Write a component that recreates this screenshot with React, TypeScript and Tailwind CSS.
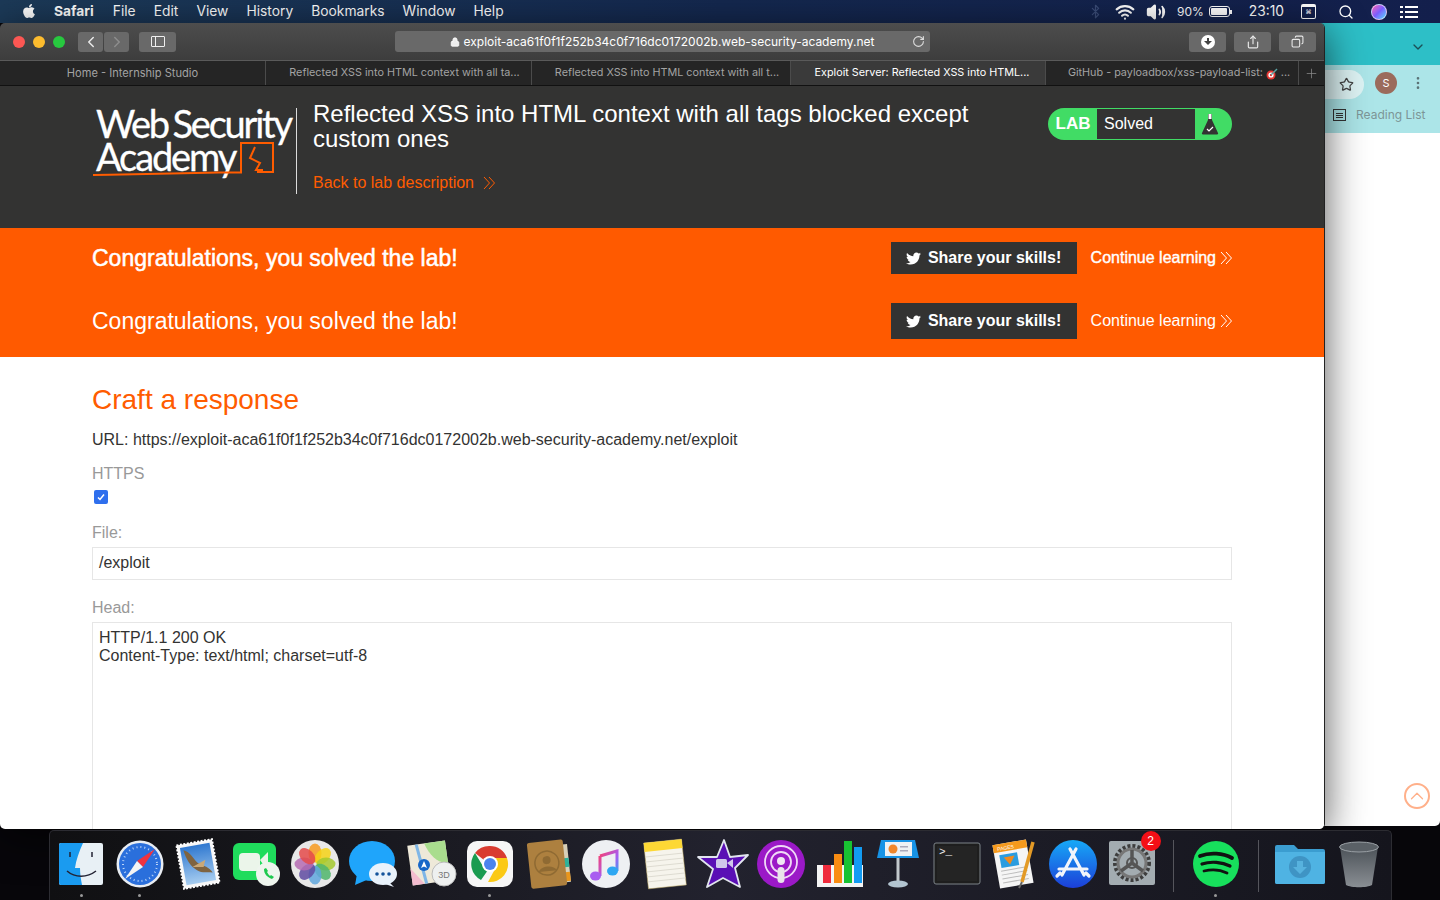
import React from 'react';
import { Bluetooth, ChevronDown, ChevronLeft, ChevronRight, ChevronUp, Copy, EllipsisVertical, Lock, Plus, RotateCw, Search, Share, Star, Volume2, Wifi } from 'lucide-react';
import { FaApple, FaTwitter } from 'react-icons/fa';

const menus = ['File', 'Edit', 'View', 'History', 'Bookmarks', 'Window', 'Help'];

const DoubleChevron = ({ className }: { className: string }) => (
  <svg className={className} width="12" height="14" viewBox="0 0 12 14" fill="none" stroke="currentColor" strokeWidth="1">
    <path d="M1 1 6.500 7 1 13M6 1 11.500 7 6 13" />
  </svg>
);

const MenuBar = () => (
  <div className="h-[23px] flex items-center pl-[21px] text-white text-[13.800px] font-['Inter',sans-serif] bg-gradient-to-r from-[#1c3a58] via-[#14284f] to-[#131f4c]">
    <FaApple size={16} className="mb-[2px]" />
    <span className="ml-[17px] font-bold">Safari</span>
    <div className="flex gap-[18.100px] ml-[19px]">
      {menus.map((m) => <span key={m}>{m}</span>)}
    </div>
    <div className="ml-auto flex items-center pr-[22px]">
      <Bluetooth size={15} className="text-[#3b4d78]" />
      <Wifi size={20} strokeWidth={2.6} className="ml-[12px]" />
      <Volume2 size={20} fill="#fff" className="ml-[11px]" />
      <span className="ml-[11px] text-[12px]">90%</span>
      <div className="ml-[5px] w-[21px] h-[11px] rounded-[3px] border border-white p-[1px]"><div className="h-full w-[16px] bg-white rounded-[1px]" /></div>
      <div className="w-[2px] h-[4px] bg-white" />
      <span className="ml-[17px]">23:10</span>
      <div className="ml-[17px] w-[15px] h-[15px] rounded-[2px] border border-white border-t-[3px] text-[6px] leading-[10px] text-center">⌘</div>
      <Search size={16} className="ml-[22px]" />
      <div className="ml-[17px] w-[16px] h-[16px] rounded-full bg-gradient-to-br from-[#ff4fb0] via-[#7a5cff] to-[#3bd6ff] border border-white/60" />
      <div className="ml-[13px] w-[18px] flex flex-col gap-[3px]">
        {[0, 1, 2].map((i) => (
          <div key={i} className="flex gap-[2px]"><div className="w-[3px] h-[2px] bg-white" /><div className="flex-1 h-[2px] bg-white" /></div>
        ))}
      </div>
    </div>
  </div>
);

const ToolButton = ({ className, children }: { className: string; children: React.ReactNode }) => (
  <div className={`h-[20px] bg-[#696969] rounded-[3px] flex items-center justify-center text-[#e8e8e8] ${className}`}>{children}</div>
);

const Toolbar = () => (
  <div className="h-[38px] flex items-center bg-gradient-to-b from-[#4d4d4d] to-[#3d3d3d] border-b border-[#5a5a5a]">
    <div className="flex gap-[8px] ml-[13px]">
      <div className="w-[12px] h-[12px] rounded-full bg-[#fc5753]" />
      <div className="w-[12px] h-[12px] rounded-full bg-[#fdbc2e]" />
      <div className="w-[12px] h-[12px] rounded-full bg-[#27c83f]" />
    </div>
    <div className="flex gap-[1px] ml-[13px]">
      <ToolButton className="w-[25px]"><ChevronLeft size={18} /></ToolButton>
      <ToolButton className="w-[25px]"><ChevronRight size={18} className="text-[#8d8d8d]" /></ToolButton>
    </div>
    <ToolButton className="w-[37px] ml-[10px]">
      <div className="w-[14px] h-[11px] border border-[#eee] rounded-[1px] flex"><div className="w-[4px] border-r border-[#eee]" /></div>
    </ToolButton>
    <div className="ml-[219px] w-[535px] h-[21px] bg-[#696969] rounded-[3px] flex items-center text-white text-[12px] font-['Inter',sans-serif] pr-[5px]">
      <div className="flex-1 flex items-center justify-center pl-[17px] pt-[1px]">
        <Lock size={10} fill="#eee" className="mr-[4px]" />
        <span>exploit-aca61f0f1f252b34c0f716dc0172002b.web-security-academy.net</span>
      </div>
      <RotateCw size={13} className="text-[#ddd]" />
    </div>
    <ToolButton className="w-[37px] ml-[259px]">
      <div className="w-[14px] h-[14px] rounded-full bg-white flex flex-col items-center justify-center">
        <div className="w-[2px] h-[3px] bg-[#444]" />
        <div className="w-0 h-0 border-x-[4px] border-x-transparent border-t-[4px] border-t-[#444]" />
      </div>
    </ToolButton>
    <ToolButton className="w-[37px] ml-[8px]"><Share size={14} /></ToolButton>
    <ToolButton className="w-[37px] ml-[8px]"><Copy size={13} className="-scale-x-100" /></ToolButton>
  </div>
);

const tabs = [
  { w: 'w-[266px]', label: 'Home - Internship Studio', pad: 'text-[11.100px]' },
  { w: 'w-[266px]', label: 'Reflected XSS into HTML context with all ta...', pad: 'pl-[12px] text-[10.800px]' },
  { w: 'w-[259px]', label: 'Reflected XSS into HTML context with all t...', pad: 'pl-[12px] text-[10.800px]' },
  { w: 'w-[255px]', label: 'Exploit Server: Reflected XSS into HTML...', pad: 'pl-[8px] text-[10.800px]', active: true },
];

const TabBar = () => (
  <div className="h-[25px] flex bg-[#252525] border-b border-[#111] text-[11px] font-['Inter',sans-serif] text-[#a3a3a3]">
    {tabs.map((t) => (
      <div key={t.label} className={`${t.w} ${t.pad} pt-[1px] border-r border-[#4b4b4b] flex items-center justify-center ${t.active ? 'bg-[#3a3a3a] text-white' : ''}`}>{t.label}</div>
    ))}
    <div className="w-[253px] pl-[14px] pt-[1px] text-[10.800px] border-r border-[#4b4b4b] flex items-center justify-center gap-[3px]">
      <span>GitHub - payloadbox/xss-payload-list:</span>
      <svg width="12" height="12" viewBox="0 0 12 12"><circle cx="5" cy="7" r="4.500" fill="#e53935" /><circle cx="5" cy="7" r="2.600" fill="#fff" /><circle cx="5" cy="7" r="1.200" fill="#e53935" /><path d="M5 7 11 1" stroke="#5ba4a4" strokeWidth="1.500" /></svg>
      <span>...</span>
    </div>
    <div className="flex-1 flex items-center justify-center"><Plus size={15} strokeWidth={1.2} className="text-[#8a8a8a]" /></div>
  </div>
);

const LabHeader = () => (
  <div className="h-[142px] bg-[#333332] flex pl-[92px] pr-[92px] pt-[14px] font-['Liberation_Sans',sans-serif] text-white">
    <div className="relative w-[205px] h-[86px] mt-[8px] border-r border-[#dcdcdc] shrink-0">
      <div className="pl-[4px] -mt-[1px] text-[38px] leading-[33px] font-['Lato',sans-serif] whitespace-nowrap [-webkit-text-stroke:0.3px_white]">
        <div className="tracking-[-2.200px] [word-spacing:-3px]">Web Security</div>
        <div className="tracking-[-2.100px]">Academy</div>
      </div>
      <svg className="absolute left-0 top-[30px]" width="190" height="42" viewBox="0 0 190 42" fill="none" stroke="#ff5c00" strokeWidth="2">
        <path d="M1 37C45 36.500 90 35.500 128 34.500H149V5H181V34H165" />
        <path d="M163 9 158 20 168 25 164 32H171" />
      </svg>
    </div>
    <div className="ml-[16px] mt-[1px] w-[680px]">
      <div className="text-[24px] leading-[25px] whitespace-nowrap">Reflected XSS into HTML context with all tags blocked except<br />custom ones</div>
      <div className="mt-[20px] flex items-center text-[16px] text-[#ff5c00]">
        <span>Back to lab description</span>
        <DoubleChevron className="ml-[9px]" />
      </div>
    </div>
    <div className="ml-auto mt-[8px] w-[184px] h-[32px] rounded-full bg-[#41dc65] flex items-center overflow-hidden">
      <span className="w-[49px] text-center text-[17px] font-bold pl-[1px]">LAB</span>
      <div className="w-[98px] h-[30px] bg-[#333332] flex items-center pl-[7px] text-[16px]">Solved</div>
      <svg className="ml-[6px]" width="18" height="22" viewBox="0 0 18 22">
        <path d="M7 1h4v6l6 13a1 1 0 0 1-1 1.500H2a1 1 0 0 1-1-1.500L7 7z" fill="#333332" />
        <rect x="7.500" y="1" width="3" height="5" fill="#fff" />
        <path d="M6 16l2 2 4-4" stroke="#fff" strokeWidth="1.200" fill="none" />
      </svg>
    </div>
  </div>
);

const Congrats = ({ bold, rowClass, btnClass }: { bold?: boolean; rowClass: string; btnClass: string }) => (
  <div className={`flex items-center px-[92px] text-white font-['Liberation_Sans',sans-serif] ${rowClass}`}>
    <span className={`text-[23px] ${bold ? '[-webkit-text-stroke:0.5px_white]' : ''}`}>Congratulations, you solved the lab!</span>
    <div className={`ml-auto w-[186px] bg-[#333332] flex items-center justify-center gap-[7px] text-[16px] font-bold ${btnClass}`}>
      <FaTwitter size={15} className="mt-[1px]" />
      <span>Share your skills!</span>
    </div>
    <span className={`ml-[14px] text-[16px] ${bold ? '[-webkit-text-stroke:0.4px_white]' : ''}`}>Continue learning</span>
    <DoubleChevron className="ml-[4px]" />
  </div>
);

const Form = () => (
  <div className="flex-1 bg-white px-[92px] font-['Liberation_Sans',sans-serif] text-[16px] text-[#333332] overflow-hidden">
    <h2 className="mt-[26px] text-[28px] leading-[34px] text-[#ff5c00]">Craft a response</h2>
    <p className="mt-[13px] leading-[20px]">URL: https://exploit-aca61f0f1f252b34c0f716dc0172002b.web-security-academy.net/exploit</p>
    <div className="mt-[14px] leading-[20px] text-[#999]">HTTPS</div>
    <div className="mt-[6px] ml-[2px] w-[14px] h-[14px] rounded-[2px] bg-[#2f6fed] flex items-center justify-center">
      <svg width="10" height="10" viewBox="0 0 10 10" fill="none" stroke="#fff" strokeWidth="1.500"><path d="M2 5.500 4 7.500 8 2.500" /></svg>
    </div>
    <div className="mt-[19px] leading-[20px] text-[#999]">File:</div>
    <div className="mt-[4px] h-[33px] border border-[#e6e6e6] flex items-center px-[6px] pb-[2px]">/exploit</div>
    <div className="mt-[18px] leading-[20px] text-[#999]">Head:</div>
    <div className="mt-[4px] h-[300px] border border-[#e6e6e6] px-[6px] pt-[6px] leading-[18px]">
      HTTP/1.1 200 OK<br />Content-Type: text/html; charset=utf-8
    </div>
  </div>
);

const SafariWindow = () => (
  <div className="absolute left-0 top-[23px] w-[1325px] h-[806px] rounded-[5px] overflow-hidden flex flex-col border-r border-[#222] shadow-[0_8px_40px_rgba(0,0,0,0.65)]">
    <Toolbar />
    <TabBar />
    <LabHeader />
    <div className="bg-[#ff5a00]">
      <Congrats bold rowClass="h-[62px] pb-[2px]" btnClass="h-[32px]" />
      <Congrats rowClass="h-[67px] pb-[5px]" btnClass="h-[36px]" />
    </div>
    <Form />
  </div>
);

const ChromeWindow = () => (
  <div className="absolute left-[1300px] top-[23px] w-[140px] h-[803px] bg-white rounded-b-[5px] flex flex-col font-['Inter',sans-serif]">
    <div className="h-[42px] bg-[#2dbfc7] flex items-center justify-end pr-[14px] pt-[6px]">
      <ChevronDown size={16} className="text-[#1c4e55]" />
    </div>
    <div className="h-[68px] bg-[#ace5e8]">
      <div className="h-[36px] flex items-center">
        <div className="w-[64px] h-[29px] mt-[2px] bg-[#ddf3f4] rounded-r-full flex items-center justify-end pr-[10px]">
          <Star size={15} className="text-[#444]" />
        </div>
        <div className="ml-[11px] w-[22px] h-[22px] rounded-full bg-[#9b6b5c] text-white text-[11px] flex items-center justify-center">S</div>
        <EllipsisVertical size={16} className="ml-[13px] text-[#5a7376]" />
      </div>
      <div className="flex items-center pl-[33px] mt-[5px] text-[12px] text-[#7d9597]">
        <div className="w-[13px] h-[12px] border border-[#333] flex flex-col justify-center gap-[1px] pl-[2px]">
          <div className="h-[1px] w-[7px] bg-[#333]" /><div className="h-[1px] w-[7px] bg-[#333]" /><div className="h-[1px] w-[7px] bg-[#333]" />
        </div>
        <span className="ml-[10px]">Reading List</span>
      </div>
    </div>
    <div className="relative flex-1">
      <div className="absolute left-[104px] top-[650px] w-[26px] h-[26px] rounded-full border-2 border-[#ffb08a] flex items-center justify-center">
        <ChevronUp size={22} strokeWidth={1.4} className="text-[#ffb08a]" />
      </div>
    </div>
  </div>
);

/* dock icons, all on a 52x52 canvas */
const Finder = () => (
  <svg width="52" height="52" viewBox="0 0 52 52">
    <rect x="4" y="5" width="44" height="42" rx="2" fill="#e8f0f5" />
    <path d="M6 5H28C24 14 21 22 20 30H25C25 36 26 42 27 47H6a2 2 0 0 1-2-2V7a2 2 0 0 1 2-2z" fill="#1a9bf0" />
    <path d="M15 14v5M37 14v5" stroke="#223" strokeWidth="1.500" />
    <path d="M12 33C20 40 32 40 41 33" stroke="#223" strokeWidth="1.500" fill="none" />
  </svg>
);

const SafariIcon = () => (
  <svg width="52" height="52" viewBox="0 0 52 52">
    <circle cx="26" cy="26" r="23.500" fill="#e9edf2" />
    <circle cx="26" cy="26" r="21" fill="#2a6fdc" />
    <circle cx="26" cy="26" r="17" fill="none" stroke="#bcd5f7" strokeWidth="2" strokeDasharray="1 3" />
    <path d="M41 11 23 23 29 29z" fill="#ef3340" />
    <path d="M11 41 23 23 29 29z" fill="#f4f4f4" />
  </svg>
);

const Mail = () => (
  <svg width="52" height="52" viewBox="0 0 52 52">
    <defs><linearGradient id="sky" x1="0" y1="0" x2="0" y2="1"><stop offset="0" stopColor="#2f78d0" /><stop offset="1" stopColor="#a7cdf0" /></linearGradient></defs>
    <g transform="rotate(-10 26 26)">
      <rect x="8" y="4" width="36" height="44" fill="#f7f7f7" stroke="#fff" strokeWidth="2" strokeDasharray="2 1.500" />
      <rect x="11" y="7" width="30" height="38" fill="url(#sky)" />
      <path d="M14 10C20 12 22 20 26 25 31 29 37 31 39 37 33 35 28 36 24 32 18 27 15 19 14 10z" fill="#7f6440" />
      <path d="M20 28 34 23 31 30z" fill="#c9a877" />
    </g>
  </svg>
);

const FaceTime = () => (
  <svg width="52" height="52" viewBox="0 0 52 52">
    <rect x="3" y="5" width="43" height="37" rx="6" fill="#1fdc5c" />
    <rect x="9" y="15" width="21" height="18" rx="4" fill="#ebf5ea" />
    <path d="M30 22 38 14V33z" fill="#ebf5ea" />
    <circle cx="38" cy="36" r="12" fill="#eef5ee" />
    <path d="M34 31c0 5 3 8 8 10l2-2-3-2-1 1c-1-1-2-2-3-4l1-1-2-3z" fill="#1fc94f" />
  </svg>
);

const petals = ['#f79a1e', '#f6d216', '#a5c92e', '#4fb56b', '#60a7de', '#5f4ba1', '#b56bb3', '#e44a4a'];
const Photos = () => (
  <svg width="52" height="52" viewBox="0 0 52 52">
    <circle cx="26" cy="26" r="24" fill="#e8e8e8" />
    {petals.map((c, i) => (
      <ellipse key={c} cx="26" cy="15" rx="6.500" ry="9.500" fill={c} fillOpacity="0.85" transform={`rotate(${i * 45} 26 26)`} />
    ))}
  </svg>
);

const Messages = () => (
  <svg width="52" height="52" viewBox="0 0 52 52">
    <ellipse cx="25" cy="23" rx="23" ry="20" fill="#1fa5fb" />
    <path d="M10 36 8 47 22 41z" fill="#1fa5fb" />
    <ellipse cx="36" cy="36" rx="14" ry="11" fill="#e9f2fb" />
    <path d="M42 44 47 49 38 46z" fill="#e9f2fb" />
    <circle cx="30" cy="36" r="1.800" fill="#14539b" /><circle cx="36" cy="36" r="1.800" fill="#14539b" /><circle cx="42" cy="36" r="1.800" fill="#14539b" />
  </svg>
);

const Maps = () => (
  <svg width="52" height="52" viewBox="0 0 52 52">
    <g transform="rotate(-8 24 26)">
      <rect x="5" y="5" width="38" height="40" fill="#eee9d9" />
      <path d="M22 5H43V27C33 27 26 18 22 5z" fill="#a9dd8e" />
      <path d="M5 28 17 45H5z" fill="#f3bccf" />
      <path d="M14 5 19 45" stroke="#7fb6e6" strokeWidth="3" />
    </g>
    <circle cx="19" cy="27" r="6" fill="#1767c8" />
    <path d="M19 23 22 30 19 28.500 16 30z" fill="#fff" />
    <circle cx="39" cy="36" r="12" fill="#eef0f0" stroke="#bbb" />
    <text x="39" y="39.500" textAnchor="middle" fontSize="9" fill="#777" fontFamily="Liberation Sans">3D</text>
  </svg>
);

const ChromeIcon = () => (
  <svg width="52" height="52" viewBox="0 0 52 52">
    <rect x="3" y="3" width="46" height="46" rx="10" fill="#f6f6f6" />
    <path d="M26 8A18 18 0 0 1 43 20H26a6 6 0 0 0-6 2L11 15A18 18 0 0 1 26 8z" fill="#d93b30" />
    <path d="M11 15 20 30l4 2-7 10A18 18 0 0 1 11 15z" fill="#1a9b50" />
    <path d="M43 20A18 18 0 0 1 24 44L31 31l1-8-6-3z" fill="#fbc915" />
    <circle cx="26" cy="26" r="8" fill="#fff" /><circle cx="26" cy="26" r="6" fill="#4b83ee" />
  </svg>
);

const Contacts = () => (
  <svg width="52" height="52" viewBox="0 0 52 52">
    <g transform="rotate(-6 26 26)">
      <rect x="42" y="8" width="5" height="38" fill="#d8d0b8" />
      <rect x="42" y="22" width="5" height="9" fill="#2eb39a" />
      <rect x="42" y="36" width="5" height="9" fill="#e9961c" />
      <rect x="7" y="3" width="36" height="46" rx="2" fill="#ad803f" />
      <circle cx="25" cy="25" r="12" fill="none" stroke="#8f6a33" strokeWidth="1.500" />
      <circle cx="25" cy="22" r="4" fill="#8f6a33" />
      <path d="M16 33C18 27 32 27 34 33z" fill="#8f6a33" />
    </g>
  </svg>
);

const Itunes = () => (
  <svg width="52" height="52" viewBox="0 0 52 52">
    <defs><linearGradient id="note" x1="0" y1="0" x2="1" y2="1"><stop offset="0" stopColor="#fb3d6b" /><stop offset="0.6" stopColor="#a95df0" /><stop offset="1" stopColor="#2ea7f2" /></linearGradient></defs>
    <circle cx="26" cy="26" r="24" fill="#eef0f3" />
    <path d="M20 18 37 13V33M20 18V38M20 18 37 13" stroke="url(#note)" strokeWidth="3" fill="none" />
    <ellipse cx="15.500" cy="38" rx="5.500" ry="4.500" fill="#a95df0" />
    <ellipse cx="32.500" cy="33" rx="5.500" ry="4.500" fill="#2ea7f2" />
  </svg>
);

const Notes = () => (
  <svg width="52" height="52" viewBox="0 0 52 52">
    <g transform="rotate(-6 26 26)">
      <rect x="7" y="3" width="38" height="46" fill="#f6f4ec" stroke="#c9b36a" strokeWidth="0.500" />
      <rect x="7" y="3" width="38" height="9" fill="#fdd835" />
      {[17, 22, 27, 32, 37, 42].map((y) => <path key={y} d={`M7 ${y}H45`} stroke="#d9d6cb" strokeWidth="0.800" />)}
    </g>
  </svg>
);

const IMovie = () => (
  <svg width="52" height="52" viewBox="0 0 52 52">
    <path d="M27 2 33 19 51 17 38 30 43 49 26 40 10 49 16 31 1 19 20 19z" fill="#5a0fb5" stroke="#e1e5ee" strokeWidth="1.800" strokeLinejoin="round" />
    <rect x="19" y="21" width="11" height="9" rx="1.500" fill="#cfc7ea" />
    <path d="M30 25 36 21V30z" fill="#cfc7ea" />
  </svg>
);

const Podcasts = () => (
  <svg width="52" height="52" viewBox="0 0 52 52" fill="none">
    <circle cx="26" cy="26" r="24" fill="#9b19c7" />
    <circle cx="26" cy="24" r="16" stroke="#f0d9f7" strokeWidth="1.800" />
    <circle cx="26" cy="24" r="10" stroke="#f0d9f7" strokeWidth="1.800" />
    <circle cx="26" cy="23" r="4" fill="#f0e6f3" />
    <rect x="22.500" y="29" width="7" height="16" rx="3.500" fill="#e9e4ea" />
  </svg>
);

const Numbers = () => (
  <svg width="52" height="52" viewBox="0 0 52 52">
    <path d="M3 27H49V49H3z" fill="#f4f4f4" />
    <rect x="9" y="27" width="8" height="18" fill="#ef2b3c" />
    <rect x="20" y="16" width="8" height="29" fill="#f98c12" />
    <rect x="30" y="3" width="8" height="42" fill="#18c232" />
    <rect x="40" y="9" width="8" height="36" fill="#129bf2" />
  </svg>
);

const Keynote = () => (
  <svg width="52" height="52" viewBox="0 0 52 52">
    <path d="M9 2H43L47 20H5z" fill="#1793e6" />
    <rect x="13" y="4" width="27" height="14" fill="#eef1f4" />
    <circle cx="21" cy="11" r="4.500" fill="#f0862b" />
    <rect x="28" y="8" width="8" height="1.500" fill="#aab" /><rect x="28" y="12" width="8" height="1.500" fill="#aab" />
    <rect x="24.500" y="20" width="3" height="24" fill="#c2c8cc" />
    <ellipse cx="26" cy="46" rx="10" ry="3.500" fill="#b3c5d1" />
  </svg>
);

const Terminal = () => (
  <svg width="52" height="52" viewBox="0 0 52 52">
    <rect x="3" y="5" width="46" height="41" rx="2" fill="#1e1e1e" stroke="#7c8388" strokeWidth="1" />
    <rect x="6" y="8" width="40" height="35" fill="#242424" />
    <text x="8" y="17" fontSize="11" fill="#eee" fontFamily="Liberation Mono">&gt;_</text>
  </svg>
);

const Pages = () => (
  <svg width="52" height="52" viewBox="0 0 52 52">
    <g transform="rotate(-10 24 26)">
      <rect x="7" y="4" width="34" height="44" fill="#f5f5f5" />
      <rect x="7" y="4" width="34" height="8" fill="#f59a1d" />
      <text x="11" y="10.500" fontSize="5" fill="#fff" fontFamily="Liberation Sans">PAGES</text>
      <rect x="12" y="15" width="18" height="13" fill="#2a9cdf" />
      <path d="M16 18H27L21 26z" fill="#f08a1c" />
      {[31, 35, 39, 43].map((y) => <path key={y} d={`M11 ${y}H37`} stroke="#bbb" strokeWidth="1" />)}
    </g>
    <path d="M44 4 33 44" stroke="#e39a26" strokeWidth="3.500" />
    <path d="M33 44 30 50" stroke="#666" strokeWidth="2" />
  </svg>
);

const AppStore = () => (
  <svg width="52" height="52" viewBox="0 0 52 52" fill="none">
    <defs><linearGradient id="store" x1="0" y1="0" x2="0" y2="1"><stop offset="0" stopColor="#17a9f7" /><stop offset="1" stopColor="#1c3fd8" /></linearGradient></defs>
    <circle cx="26" cy="26" r="24" fill="url(#store)" />
    <path d="M29 11 15 37M23 11 37 37M12 31H40M10 38l3-3M39 35l3 3" stroke="#f2f5fb" strokeWidth="3.200" strokeLinecap="round" />
  </svg>
);

const SysPrefs = () => (
  <div className="relative">
    <svg width="52" height="52" viewBox="0 0 52 52" fill="none">
      <rect x="3" y="3" width="46" height="44" rx="2" fill="#a3acb1" />
      <circle cx="26" cy="25" r="17" stroke="#3e3e3e" strokeWidth="4" strokeDasharray="3 2" />
      <circle cx="26" cy="25" r="14" stroke="#777" strokeWidth="3" />
      <path d="M26 25V12M26 25 15 33M26 25 37 33" stroke="#555" strokeWidth="3.500" />
      <circle cx="26" cy="25" r="5" stroke="#555" strokeWidth="2" />
    </svg>
    <div className="absolute -top-[7px] right-[-3px] w-[20px] h-[20px] rounded-full bg-[#f40f16] text-white text-[12px] flex items-center justify-center font-['Liberation_Sans',sans-serif]">2</div>
  </div>
);

const Spotify = () => (
  <svg width="52" height="52" viewBox="0 0 52 52" fill="none">
    <circle cx="26" cy="26" r="23" fill="#17e05c" />
    <path d="M10 18C20 14 33 15 42 20" stroke="#111" strokeWidth="3.800" strokeLinecap="round" />
    <path d="M12 26C21 23 32 24 40 28" stroke="#111" strokeWidth="3.200" strokeLinecap="round" />
    <path d="M14 33C22 31 31 32 37 35" stroke="#111" strokeWidth="2.800" strokeLinecap="round" />
  </svg>
);

const Downloads = () => (
  <svg width="52" height="52" viewBox="0 0 52 52">
    <path d="M1 9a2 2 0 0 1 2-2H20L24 11H49a2 2 0 0 1 2 2V44a2 2 0 0 1-2 2H3a2 2 0 0 1-2-2z" fill="#3b9dd0" />
    <path d="M1 14H51V44a2 2 0 0 1-2 2H3a2 2 0 0 1-2-2z" fill="#4fb3e3" />
    <circle cx="26" cy="29" r="11" fill="#3f94c4" />
    <path d="M23 23H29V29H33L26 36 19 29H23z" fill="#57b2de" />
  </svg>
);

const Trash = () => (
  <svg width="52" height="52" viewBox="0 0 52 52">
    <defs><linearGradient id="bin" x1="0" y1="0" x2="0" y2="1"><stop offset="0" stopColor="#4c5258" /><stop offset="1" stopColor="#8a8f94" /></linearGradient></defs>
    <path d="M7 9 13 47C18 50 34 50 39 47L45 9z" fill="url(#bin)" />
    <ellipse cx="26" cy="9" rx="19.500" ry="5" fill="#5a6066" stroke="#9aa0a5" strokeWidth="1" />
  </svg>
);

const Slot = ({ dot, children }: { dot?: boolean; children: React.ReactNode }) => (
  <div className="relative w-[58.360px] h-[69px] flex justify-center pt-[7px] shrink-0">
    {children}
    {dot && <div className="absolute bottom-[3px] left-[27.500px] w-[3px] h-[3px] rounded-full bg-[#999]" />}
  </div>
);

const Divider = () => <div className="w-[1px] h-[52px] mt-[9px] mx-[12.500px] bg-[#55555c] shrink-0" />;

const Dock = () => (
  <div className="absolute left-[49px] top-[830px] w-[1343px] h-[70px] rounded-t-[5px] border border-[#2c2c32] border-b-0 flex pl-[2px] bg-gradient-to-r from-[#101012] via-[#22222e] to-[#15151d]">
    <Slot dot><Finder /></Slot>
    <Slot dot><SafariIcon /></Slot>
    <Slot><Mail /></Slot>
    <Slot><FaceTime /></Slot>
    <Slot><Photos /></Slot>
    <Slot><Messages /></Slot>
    <Slot><Maps /></Slot>
    <Slot dot><ChromeIcon /></Slot>
    <Slot><Contacts /></Slot>
    <Slot><Itunes /></Slot>
    <Slot><Notes /></Slot>
    <Slot><IMovie /></Slot>
    <Slot><Podcasts /></Slot>
    <Slot><Numbers /></Slot>
    <Slot><Keynote /></Slot>
    <Slot><Terminal /></Slot>
    <Slot><Pages /></Slot>
    <Slot><AppStore /></Slot>
    <Slot><SysPrefs /></Slot>
    <Divider />
    <Slot dot><Spotify /></Slot>
    <Divider />
    <Slot><Downloads /></Slot>
    <Slot><Trash /></Slot>
  </div>
);

export default function App() {
  return (
    <div className="relative w-[1440px] h-[900px] overflow-hidden bg-[#07060a]">
      <MenuBar />
      <ChromeWindow />
      <SafariWindow />
      <Dock />
    </div>
  );
}
